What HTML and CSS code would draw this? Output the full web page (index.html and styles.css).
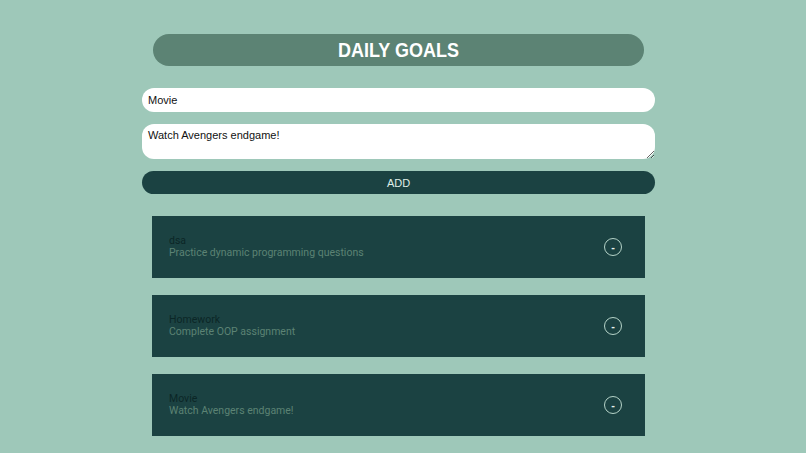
FILE: index.html
```html
<!DOCTYPE html>
<html lang="en">

<head>
    <meta charset="UTF-8">
    <meta name="viewport" content="width=device-width, initial-scale=1.0">
    <title>Daily Goals</title>
    <link rel="stylesheet" href="styles.css">
</head>

<body>
    <div class="app">
        <div class="title">
            <h1>DAILY GOALS</h1>
        </div>
        <form class="goal-form">
            <input type="text" class="goal-input" value="Movie">
            <textarea class="goal-text">Watch Avengers endgame!</textarea>
            <button type="button" class="add-btn">ADD</button>
        </form>
        <div class="goal-list">
            <div class="goal">
                <div class="goal-info">
                    <h3>dsa</h3>
                    <p>Practice dynamic programming questions</p>
                </div>
                <button class="remove-btn">-</button>
            </div>
            <div class="goal">
                <div class="goal-info">
                    <h3>Homework</h3>
                    <p>Complete OOP assignment</p>
                </div>
                <button class="remove-btn">-</button>
            </div>
            <div class="goal">
                <div class="goal-info">
                    <h3>Movie</h3>
                    <p>Watch Avengers endgame!</p>
                </div>
                <button class="remove-btn">-</button>
            </div>
        </div>
    </div>
</body>

</html>
```

FILE: styles.css
```css
/* Reset */
body,
h1,
h3,
p {
    margin: 0;
    padding: 0;
    box-sizing: border-box;
}

body {
    font-family: 'Liberation Sans', Arial, sans-serif;
    background-color: #9ec8b9;
    padding-right: 9px;
}

.app {
    width: 513px;
    margin: 0 auto;
    padding: 34px 0 17px;
}

/* Titulo */
.title {
    margin: 0 11px;
    height: 32px;
    background-color: #5c8374;
    border-radius: 16px;
    display: flex;
    align-items: center;
    justify-content: center;
}

.title h1 {
    color: #fff;
    font-size: 18px;
    font-weight: 700;
    transform: scaleY(1.12);
}

/* Formulario */
.goal-form {
    margin-top: 22px;
    display: flex;
    flex-direction: column;
    gap: 12px;
}

.goal-input,
.goal-text {
    box-sizing: border-box;
    width: 100%;
    border: none;
    border-radius: 12px;
    background-color: #fff;
    font-family: 'Liberation Sans', Arial, sans-serif;
    font-size: 11px;
    color: #111;
    padding: 0 6px;
    outline: none;
}

.goal-input {
    height: 24px;
}

.goal-text {
    height: 35px;
    padding-top: 5px;
    resize: vertical;
}

.add-btn {
    height: 23px;
    border: none;
    border-radius: 12px;
    background-color: #1b4242;
    color: #dfeee8;
    font-family: 'Liberation Sans', Arial, sans-serif;
    font-size: 11px;
}

/* Lista de metas */
.goal-list {
    margin: 22px 10px 0;
    display: flex;
    flex-direction: column;
    gap: 17px;
}

.goal {
    height: 62px;
    background-color: #1b4242;
    display: flex;
    align-items: center;
    justify-content: space-between;
    padding: 0 23px 0 17px;
    box-sizing: border-box;
}

.goal-info {
    font-family: Roboto, sans-serif;
    font-size: 10.5px;
    line-height: 12px;
}

.goal-info h3 {
    font-size: 10.5px;
    font-weight: 400;
    color: #0b2626;
}

.goal-info p {
    color: #5c8374;
}

.remove-btn {
    width: 18px;
    height: 18px;
    border: 1px solid #b5d3c8;
    border-radius: 50%;
    background: transparent;
    color: #e8f2ee;
    font-size: 11px;
    font-weight: 700;
    padding: 0;
    line-height: 15px;
}
```
